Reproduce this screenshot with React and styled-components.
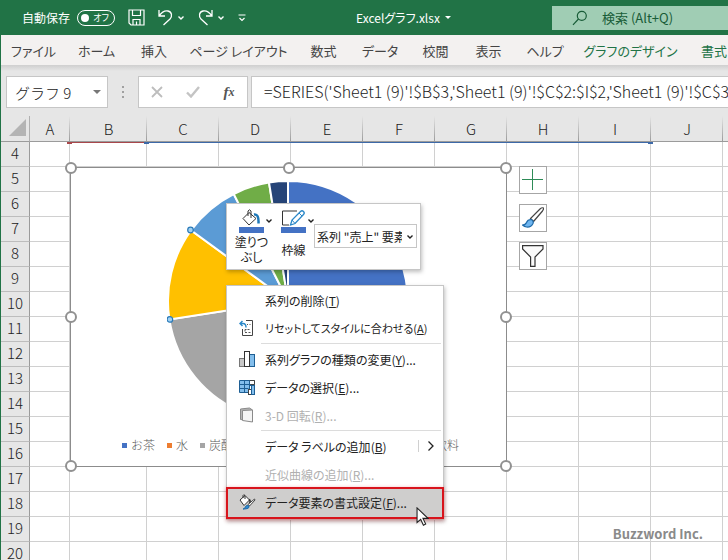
import React from 'react';
import styled, { createGlobalStyle } from 'styled-components';

const TABS = ['ファイル', 'ホーム', '挿入', 'ページ レイアウト', '数式', 'データ', '校閲', '表示', 'ヘルプ'];
const CHART_TABS = ['グラフのデザイン', '書式'];

const COLUMNS = [
  { name: 'A', width: 40 },
  { name: 'B', width: 77 },
  { name: 'C', width: 72 },
  { name: 'D', width: 72 },
  { name: 'E', width: 72 },
  { name: 'F', width: 72 },
  { name: 'G', width: 72 },
  { name: 'H', width: 72 },
  { name: 'I', width: 72 },
  { name: 'J', width: 72 },
  { name: '', width: 72 },
];

const ROWS = Array.from({ length: 17 }, (_, i) => i + 4);

const MENU = [
  { label: '系列の削除', accel: 'T' },
  { label: 'リセットしてスタイルに合わせる', accel: 'A', icon: 'reset', compact: true },
  { divider: true },
  { label: '系列グラフの種類の変更', accel: 'Y', more: true, icon: 'chart' },
  { label: 'データの選択', accel: 'E', more: true, icon: 'data' },
  { label: '3-D 回転', accel: 'R', more: true, icon: 'cube', disabled: true },
  { divider: true },
  { label: 'データ ラベルの追加', accel: 'B', submenu: true },
  { label: '近似曲線の追加', accel: 'R', more: true, disabled: true },
  { label: 'データ要素の書式設定', accel: 'F', more: true, icon: 'format', active: true },
];

const MenuIcon = ({ name }) => {
  if (name === 'reset') {
    return (
      <svg width="16" height="16" viewBox="0 0 16 16" fill="none">
        <path d="M7 0.500h6.500v15h-10V9" stroke="#444" />
        <path d="M8 4.500h1M10.500 4.500h1M6 11.500v-2h1.500M8.500 9.500h2M6 12.500h2M9.500 12.500h2" stroke="#555" />
        <path d="M3.500 1L1 3.500L3.500 6M1 3.500h3c2.300 0 3 1.300 3 4" stroke="#2b88c8" strokeWidth="1.500" />
      </svg>
    );
  }
  if (name === 'chart') {
    return (
      <svg width="16" height="16" viewBox="0 0 16 16">
        <rect x="0.500" y="7.500" width="5" height="8" fill="#c8c8c8" stroke="#777" />
        <rect x="10.500" y="3.500" width="5" height="12" fill="#83beec" stroke="#1e5f94" />
        <rect x="5.500" y="0.500" width="5" height="15" fill="#fff" stroke="#333" />
      </svg>
    );
  }
  if (name === 'data') {
    return (
      <svg width="16" height="16" viewBox="0 0 16 16">
        <path d="M0.500 1.500h15v5h-5v7h-10z" fill="#83beec" stroke="#1e5f94" />
        <path d="M10.500 1.500h5v4h-5z" fill="#fff" stroke="#444" />
        <path d="M5.500 1.500v12M10.500 1.500v6M0.500 5.500h11M0.500 9.500h9" stroke="#1e5f94" fill="none" />
        <rect x="9.500" y="10.500" width="3" height="5" fill="#fff" stroke="#444" />
        <rect x="12.500" y="6.500" width="3" height="9" fill="#83beec" stroke="#1e5f94" />
      </svg>
    );
  }
  if (name === 'cube') {
    return (
      <svg width="16" height="16" viewBox="0 0 16 16" fill="#f4f4f4" stroke="#8a8a8a" strokeLinejoin="round">
        <path d="M1.500 2L10.500 1l3 2v11.500l-3-1L1.500 12.500z" fill="#b5b5b5" />
        <path d="M3.500 3.500L13.500 3v12L3.500 13.500z" />
      </svg>
    );
  }
  if (name === 'format') {
    return (
      <svg width="17" height="16" viewBox="0 0 17 16" fill="none">
        <path d="M6 1.500L1 6l4 5.500L10.500 6z" fill="#fff" stroke="#333" />
        <path d="M4 4V1.500Q4.500 0 6 1.500V5" stroke="#333" />
        <path d="M10 5.500q2 1 .5 4" stroke="#333" strokeWidth="1.500" />
        <path d="M15.500 5L16 6l-5.500 6-1.500-1.500z" fill="#fff" stroke="#444" />
        <path d="M4 15q2 0 2.500-2.500Q8 10.500 10 12q1 3-6 3z" fill="#2f8ad0" stroke="#1e6aa8" />
      </svg>
    );
  }
  return null;
};

const Chevron = ({ size = 8, color = 'currentColor' }) => (
  <svg width={size} height={size} viewBox="0 0 8 8" fill="none">
    <path d="M1.500 2.500L4 5l2.500-2.500" stroke={color} strokeWidth="1.400" />
  </svg>
);

const TitleBar = () => (
  <Header>
    <QuickAccess>
      <AutoSave>
        自動保存
        <Pill>
          <input type="checkbox" role="switch" />
          <i />
          オフ
        </Pill>
      </AutoSave>
      <ToolButton aria-label="上書き保存">
        <svg width="17" height="17" viewBox="0 0 17 17" fill="none" stroke="#fff" strokeWidth="1.200">
          <path d="M1 1h15v15H3l-2-2z" />
          <path d="M4.500 1v5.500h8V1M5 16v-5.500h7V16M8.500 12.500V16" />
        </svg>
      </ToolButton>
      <ToolButton aria-label="元に戻す">
        <svg width="15" height="17" viewBox="0 0 15 17" fill="none" stroke="#fff" strokeWidth="1.300">
          <path d="M1 1v6h6M1 7C3.500 3.500 6 1 10 2c4 1 4.500 5 2 8L5.500 16" />
        </svg>
        <Chevron />
      </ToolButton>
      <ToolButton aria-label="やり直し">
        <svg width="15" height="17" viewBox="0 0 15 17" fill="none" stroke="#fff" strokeWidth="1.300">
          <path d="M14 1v6H8M14 7C11.500 3.500 9 1 5 2c-4 1-4.500 5-2 8l6.500 6" />
        </svg>
        <Chevron />
      </ToolButton>
      <ToolButton aria-label="クイック アクセス ツール バーのユーザー設定">
        <svg width="8" height="8" viewBox="0 0 8 8" fill="none" stroke="#fff" strokeWidth="1.200">
          <path d="M0.500 1h7M1.500 4L4 6.500L6.500 4" />
        </svg>
      </ToolButton>
    </QuickAccess>
    <FileName>
      Excelグラフ.xlsx
      <Triangle $size={3} $color="#fff" />
    </FileName>
    <Search>
      <svg width="16" height="16" viewBox="0 0 16 16" fill="none" stroke="#185c37" strokeWidth="1.200">
        <circle cx="9.800" cy="5.800" r="4.500" />
        <path d="M6.500 9L1 14.800" />
      </svg>
      <input type="text" aria-label="検索" placeholder="検索 (Alt+Q)" />
    </Search>
  </Header>
);

const FormulaBar = () => (
  <FormulaRow>
    <NameBox>
      <input aria-label="名前ボックス" defaultValue="グラフ 9" />
      <button aria-label="名前の一覧">
        <Triangle $size={4} $color="#777" />
      </button>
    </NameBox>
    <Grip>
      <i />
      <i />
      <i />
    </Grip>
    <FormulaTools>
      <button aria-label="キャンセル">
        <svg width="12" height="12" viewBox="0 0 12 12" stroke="#bdbdbd" strokeWidth="1.800">
          <path d="M1 1l10 10M11 1L1 11" />
        </svg>
      </button>
      <button aria-label="入力">
        <svg width="14" height="12" viewBox="0 0 14 12" fill="none" stroke="#c4c4c4" strokeWidth="2.400">
          <path d="M1 6.500l4 4L13 1" />
        </svg>
      </button>
      <FxButton aria-label="関数の挿入">
        f<sub>x</sub>
      </FxButton>
    </FormulaTools>
    <FormulaInput
      aria-label="数式バー"
      defaultValue="=SERIES('Sheet1 (9)'!$B$3,'Sheet1 (9)'!$C$2:$I$2,'Sheet1 (9)'!$C$3"
    />
  </FormulaRow>
);

const Grid = () => (
  <Table>
    <colgroup>
      <col style={{ width: 30 }} />
      {COLUMNS.map((c, i) => (
        <col key={i} style={{ width: c.width }} />
      ))}
    </colgroup>
    <thead>
      <tr>
        <Corner>
          <svg width="17" height="17" viewBox="0 0 17 17">
            <path d="M17 0v17H0z" fill="#b4b4b4" />
          </svg>
        </Corner>
        {COLUMNS.map((c, i) => (
          <ColumnHead key={i} scope="col">
            {c.name}
          </ColumnHead>
        ))}
      </tr>
    </thead>
    <tbody>
      {ROWS.map((row) => (
        <tr key={row}>
          <RowHead scope="row">{row}</RowHead>
          {COLUMNS.map((c, i) => (
            <Cell key={i} />
          ))}
        </tr>
      ))}
    </tbody>
  </Table>
);

const PieChart = () => (
  <Chart>
    <Pie viewBox="0 0 242 242">
      <g stroke="#fff" strokeWidth="2">
        <path d="M121 121V1A120 120 0 0 1 200 211z" fill="#4472c4" />
        <path d="M121 121L200 211A120 120 0 0 1 80 234z" fill="#ed7d31" />
        <path d="M121 121L80 234A120 120 0 0 1 2.400 139.400z" fill="#a5a5a5" />
        <path d="M121 121L2.400 139.400A120 120 0 0 1 24 50.300z" fill="#ffc000" />
        <path d="M121 121L24 50.300A120 120 0 0 1 66.700 14z" fill="#5b9bd5" />
        <path d="M121 121L66.700 14A120 120 0 0 1 102 2.500z" fill="#70ad47" />
        <path d="M121 121L102 2.500A120 120 0 0 1 121 1z" fill="#264478" />
      </g>
      <g fill="#9fd0f2" stroke="#2a7ab8" strokeWidth="1.200">
        <circle cx="23.500" cy="50" r="2.800" />
        <circle cx="2.900" cy="139.400" r="2.800" />
      </g>
    </Pie>
    <Legend>
      <LegendItem $color="#4472c4">お茶</LegendItem>
      <LegendItem $color="#ed7d31">水</LegendItem>
      <LegendItem $color="#a5a5a5">炭酸</LegendItem>
      <LegendItem $color="#264478" $last>
        飲料
      </LegendItem>
    </Legend>
    <Handle $x="0%" $y="0%" />
    <Handle $x="50%" $y="0%" />
    <Handle $x="100%" $y="0%" />
    <Handle $x="0%" $y="50%" />
    <Handle $x="100%" $y="50%" />
    <Handle $x="0%" $y="100%" />
    <Handle $x="50%" $y="100%" />
    <Handle $x="100%" $y="100%" />
  </Chart>
);

const ChartButtons = () => (
  <SideButtons>
    <SideButton aria-label="グラフ要素">
      <svg width="22" height="22" viewBox="0 0 22 22" stroke="#2e8b57" fill="none">
        <path d="M10.500 0v21M0 10.500h21" />
      </svg>
    </SideButton>
    <SideButton aria-label="グラフ スタイル">
      <svg width="22" height="22" viewBox="0 0 22 22" fill="none" strokeWidth="1.200">
        <path d="M21.500 1q-1.500-.8-3.500 1L8.500 11.500l3 3L20.500 4q1.500-2 1-3z" fill="#fff" stroke="#444" />
        <path d="M0.500 18q3 0 4-2.500q1-3 4.500-3q3 1 2 4q-2 4-6.500 3.500q-2-.2-4-2z" fill="#6fb5ef" stroke="#1e6aa8" />
      </svg>
    </SideButton>
    <SideButton aria-label="グラフ フィルター">
      <svg width="22" height="22" viewBox="0 0 22 22" fill="#fafafa" stroke="#333" strokeWidth="1.200">
        <path d="M0.600 0.600h20.400v3.400l-8 8v9.400h-4.400V12l-8-8z" />
      </svg>
    </SideButton>
  </SideButtons>
);

const MiniToolbar = () => (
  <Mini>
    <MiniButton>
      <MiniIcon>
        <svg width="25" height="24" viewBox="0 0 25 24" fill="none">
          <path d="M10 3.500L4 9.500l6 6.500 7-6.500z" fill="#fff" stroke="#333" />
          <path d="M9 7V2Q10.500-.5 12 2V9" stroke="#333" />
          <path d="M15 5.500q5-1 4.500 9" stroke="#1e78b8" strokeWidth="2.500" />
          <path d="M0 18h25v6H0z" fill="#4472c4" />
        </svg>
        <Chevron />
      </MiniIcon>
      <MiniLabel>
        <span>塗りつ</span>
        <span>ぶし</span>
      </MiniLabel>
    </MiniButton>
    <MiniButton>
      <MiniIcon>
        <svg width="25" height="24" viewBox="0 0 25 24" fill="none">
          <path d="M16 2H1.500v14H8" stroke="#333" />
          <path d="M9.500 16l1.500-5L19.500 2.500q1.500-1.500 3 0t0 3L14 14.500z" fill="#fff" stroke="#2b88c8" strokeWidth="1.300" />
          <path d="M11 11l3 3.500M18 4l3 3" stroke="#2b88c8" />
          <path d="M0 18h25v6H0z" fill="#4472c4" />
        </svg>
        <Chevron />
      </MiniIcon>
      <MiniLabel>枠線</MiniLabel>
    </MiniButton>
    <SelectWrap>
      <select aria-label="グラフ要素">
        <option>系列 "売上" 要素 "お茶"</option>
      </select>
      <Chevron />
    </SelectWrap>
  </Mini>
);

const ContextMenu = () => (
  <Menu>
    {MENU.map((item, i) =>
      item.divider ? (
        <Divider key={i} />
      ) : (
        <MenuItem key={i} $active={item.active} $compact={item.compact} disabled={item.disabled}>
          <MenuIconBox>
            <MenuIcon name={item.icon} />
          </MenuIconBox>
          <span>
            {item.label}(<u>{item.accel}</u>){item.more && '...'}
          </span>
          {item.submenu && (
            <Submenu>
              <svg width="8" height="12" viewBox="0 0 8 12" fill="none" stroke="#222" strokeWidth="1.300">
                <path d="M1.500 1.500L6 6l-4.500 4.500" />
              </svg>
            </Submenu>
          )}
        </MenuItem>
      )
    )}
  </Menu>
);

const App = () => (
  <Window>
    <GlobalStyle />
    <TitleBar />
    <Ribbon>
      {TABS.map((tab) => (
        <Tab key={tab}>{tab}</Tab>
      ))}
      {CHART_TABS.map((tab) => (
        <Tab key={tab} $contextual>
          {tab}
        </Tab>
      ))}
    </Ribbon>
    <FormulaBar />
    <Sheet>
      <Grid />
      <RangeLine $left={69} $width={77} $color="#a8474b" />
      <RangeLine $left={146} $width={504} $color="#3d69a8" $end />
      <PieChart />
      <ChartButtons />
      <MiniToolbar />
      <ContextMenu />
      <Pointer width="13" height="20" viewBox="0 0 14 22">
        <path d="M1 1v16l4-3.500 3 6.500 2.500-1.200-3-6.300H13z" fill="#fff" stroke="#222" strokeWidth="1.200" />
      </Pointer>
    </Sheet>
    <Watermark>Buzzword Inc.</Watermark>
  </Window>
);

const GlobalStyle = createGlobalStyle`
  * {
    box-sizing: border-box;
  }
  body {
    margin: 0;
    overflow: hidden;
    font-family: "Noto Sans CJK JP", sans-serif;
    font-size: 12px;
    color: #222;
  }
  button, input, select {
    font: inherit;
    color: inherit;
    border: 0;
    padding: 0;
    margin: 0;
    background: none;
    outline: none;
  }
  svg {
    display: block;
    flex-shrink: 0;
  }
`;

const Window = styled.div`
  position: relative;
  height: 100vh;
  display: flex;
  flex-direction: column;
  overflow: hidden;
  background: #e6e6e6;
  border-left: 1px solid #217346;
`;

const Header = styled.header`
  display: grid;
  grid-template-columns: 352px 199px 1fr;
  align-items: center;
  height: 35px;
  flex-shrink: 0;
  background: #217346;
  color: #fff;
  font-feature-settings: "palt";
`;

const QuickAccess = styled.div`
  display: flex;
  align-items: center;
  gap: 13px;
  padding-left: 21px;
`;

const AutoSave = styled.label`
  display: flex;
  align-items: center;
  gap: 7px;
`;

const Pill = styled.span`
  position: relative;
  display: flex;
  align-items: center;
  justify-content: space-between;
  width: 38px;
  height: 16px;
  padding: 0 5px 0 3px;
  border: 1px solid #fff;
  border-radius: 8px;
  font-size: 9px;
  line-height: 14px;

  input {
    position: absolute;
    inset: 0;
    opacity: 0;
  }
  i {
    width: 8px;
    height: 8px;
    border-radius: 50%;
    background: #fff;
  }
`;

const ToolButton = styled.button`
  display: flex;
  align-items: center;
  gap: 4px;
`;

const Triangle = styled.i`
  border: ${(p) => p.$size}px solid transparent;
  border-bottom: 0;
  border-top-color: ${(p) => p.$color};
`;

const FileName = styled.div`
  display: flex;
  align-items: center;
  gap: 5px;
  padding-left: 3px;
`;

const Search = styled.label`
  display: flex;
  align-items: center;
  gap: 14px;
  height: 24px;
  padding-left: 20px;
  background: #a0cdb4;
  color: #185c37;
  font-size: 13px;

  input {
    flex: 1;
    min-width: 0;
  }
  input::placeholder {
    color: #185c37;
    opacity: 1;
  }
`;

const Ribbon = styled.nav`
  display: grid;
  grid-template-columns: 65px 61px 54px 115px 55px 58px 53px 53px 60px 111px 56px;
  height: 30px;
  flex-shrink: 0;
  background: #f3f1f0;
  font-size: 13px;
  font-feature-settings: "palt";
`;

const Tab = styled.button`
  white-space: nowrap;
  color: ${(p) => (p.$contextual ? '#217346' : '#444')};
`;

const FormulaRow = styled.div`
  display: flex;
  height: 51px;
  flex-shrink: 0;
  padding: 11px 0 8px 5px;
  background: linear-gradient(#cfcfcf, #e6e6e6 6px);
  font-size: 15px;
  font-weight: 300;
`;

const NameBox = styled.div`
  display: flex;
  align-items: center;
  width: 102px;
  padding: 0 6px 0 8px;
  background: #fff;
  border: 1px solid #c6c6c6;

  input {
    flex: 1;
    min-width: 0;
  }
  button {
    display: flex;
  }
`;

const Grip = styled.div`
  display: flex;
  flex-direction: column;
  align-items: center;
  justify-content: center;
  gap: 3px;
  width: 30px;

  i {
    width: 2px;
    height: 2px;
    background: #a0a0a0;
  }
`;

const FormulaTools = styled.div`
  display: grid;
  grid-template-columns: repeat(3, 1fr);
  width: 110px;
  margin-right: 3px;
  background: #fff;
  border: 1px solid #c6c6c6;

  button {
    display: flex;
    align-items: center;
    justify-content: center;
  }
`;

const FxButton = styled.button`
  && {
    color: #555;
    font: italic bold 15px "Liberation Serif", serif;
  }

  sub {
    font-size: 12px;
    line-height: 12px;
  }
`;

const FormulaInput = styled.input`
  && {
    flex: 1;
    min-width: 0;
    padding: 0 0 3px 12px;
    background: #fff;
    border: 1px solid #c6c6c6;
    border-right: 0;
    color: #222;
    font-size: 16px;
  }
`;

const Sheet = styled.main`
  position: relative;
  flex: 1;
  min-height: 0;
  margin-left: -1px;
  overflow: hidden;
`;

const Table = styled.table`
  table-layout: fixed;
  width: 795px;
  border-spacing: 0;
  background: #fff;
  font-size: 15px;
  line-height: 20px;

  th, td {
    padding: 0 0 3px;
    height: 25px;
  }
`;

const Corner = styled.td`
  background: #e6e6e6;
  border-right: 1px solid #b0b0b0;
  border-bottom: 1px solid #9b9b9b;
  border-left: 1px solid #217346;

  svg {
    margin-left: 8px;
  }
`;

const ColumnHead = styled.th`
  && {
    height: 26px;
    padding: 0;
  }
  font-weight: 300;
  border-bottom: 1px solid #9b9b9b;
  background: linear-gradient(#e6e6e6, #9b9b9b) right / 1px 100% no-repeat #e6e6e6;
`;

const RowHead = styled.th`
  font-weight: 300;
  background: #e6e6e6;
  border-right: 1px solid #9b9b9b;
  border-bottom: 1px solid #bdbdbd;
  border-left: 1px solid #217346;
`;

const Cell = styled.td`
  border-right: 1px solid #d0d0d0;
  border-bottom: 1px solid #d0d0d0;
`;

const RangeLine = styled.div`
  position: absolute;
  top: 26px;
  left: ${(p) => p.$left}px;
  width: ${(p) => p.$width}px;
  height: 1px;
  background: ${(p) => p.$color};

  &::before, &::after {
    content: "";
    position: absolute;
    top: 0;
    left: -2px;
    width: 5px;
    height: 2px;
    background: ${(p) => p.$color};
  }
  &::after {
    display: ${(p) => (p.$end ? 'block' : 'none')};
    left: auto;
    right: -3px;
  }
`;

const Chart = styled.figure`
  position: absolute;
  top: 51px;
  left: 70px;
  width: 437px;
  height: 300px;
  margin: 0;
  padding: 12px 1px 0 0;
  display: flex;
  flex-direction: column;
  align-items: center;
  background: #fff;
  border: 1px solid #8c8c8c;
`;

const Pie = styled.svg`
  width: 242px;
  height: 242px;
`;

const Legend = styled.figcaption`
  display: flex;
  align-items: center;
  align-self: stretch;
  gap: 12px;
  padding: 13px 46px 0 51px;
  color: #595959;
  line-height: 20px;
  font-weight: 300;
`;

const LegendItem = styled.span`
  display: flex;
  align-items: center;
  gap: 4px;
  margin-left: ${(p) => (p.$last ? 'auto' : 0)};

  &::before {
    content: "";
    width: 5px;
    height: 5px;
    background: ${(p) => p.$color};
  }
`;

const Handle = styled.i`
  position: absolute;
  left: ${(p) => p.$x};
  top: ${(p) => p.$y};
  width: 12px;
  height: 12px;
  margin: -6px;
  border: 2px solid #919191;
  border-radius: 50%;
  background: #fff;
`;

const SideButtons = styled.div`
  position: absolute;
  top: 50px;
  left: 519px;
  display: flex;
  flex-direction: column;
  gap: 10px;
`;

const SideButton = styled.button`
  && {
    display: flex;
    align-items: center;
    justify-content: center;
    width: 28px;
    height: 28px;
    background: #fff;
    border: 1px solid #a6a6a6;
  }
`;

const Mini = styled.div`
  position: absolute;
  top: 87px;
  left: 226px;
  display: grid;
  grid-template-columns: 42px 36px 1fr;
  align-items: start;
  width: 195px;
  height: 67px;
  padding: 5px 3px 0 9px;
  background: #fff;
  border: 1px solid #c6c6c6;
  box-shadow: 1px 2px 4px rgba(0, 0, 0, 0.25);
  font-feature-settings: "palt";
`;

const MiniButton = styled.button`
  display: flex;
  flex-direction: column;
  align-items: flex-start;
  height: 56px;
`;

const MiniIcon = styled.span`
  display: flex;
  align-items: center;
  gap: 1px;
  padding-left: 3px;
`;

const MiniLabel = styled.span`
  display: flex;
  flex: 1;
  flex-direction: column;
  align-items: center;
  justify-content: center;
  width: 31px;
  line-height: 15px;
  white-space: nowrap;
`;

const SelectWrap = styled.div`
  position: relative;
  height: 24px;
  margin-top: 15px;
  border: 1px solid #c6c6c6;

  select {
    appearance: none;
    width: 100%;
    height: 22px;
    padding: 0 14px 0 2px;
    font-feature-settings: "palt";
  }
  svg {
    position: absolute;
    right: 2px;
    top: 8px;
    pointer-events: none;
  }
`;

const Menu = styled.div`
  position: absolute;
  top: 169px;
  left: 226px;
  width: 218px;
  background: #fff;
  border: 1px solid #c6c6c6;
  box-shadow: 1px 2px 4px rgba(0, 0, 0, 0.25);
  font-feature-settings: "palt";
`;

const MenuItem = styled.button`
  && {
    display: flex;
    align-items: center;
    width: 100%;
    height: 28px;
    padding: 0 8px 0 12px;
    white-space: nowrap;
    font-size: ${(p) => (p.$compact ? 11 : 12)}px;
  }
  &&:disabled {
    color: #b0b0b0;
  }
  ${(p) =>
    p.$active &&
    `
    && {
      width: 218px;
      height: 32px;
      margin: -1px -1px 0;
      padding: 0 6px 2px 11px;
      border: 2px solid #d8141c;
      background: #cfcecd;
      box-shadow: 0 1px 4px rgba(216, 20, 28, 0.4);
    }
  `}
`;

const MenuIconBox = styled.span`
  width: 26px;
  flex-shrink: 0;
`;

const Submenu = styled.span`
  margin-left: auto;
  padding-left: 8px;
  border-left: 1px solid #d0d0d0;
`;

const Divider = styled.hr`
  height: 1px;
  margin: 1px 2px 1px 34px;
  border: 0;
  background: #dcdcdc;
`;

const Pointer = styled.svg`
  position: absolute;
  top: 391px;
  left: 416px;
`;

const Watermark = styled.div`
  position: absolute;
  right: 25px;
  bottom: 16px;
  color: #8a8a8a;
  font-size: 13px;
  font-weight: 700;
  line-height: 20px;
`;

export default App;
